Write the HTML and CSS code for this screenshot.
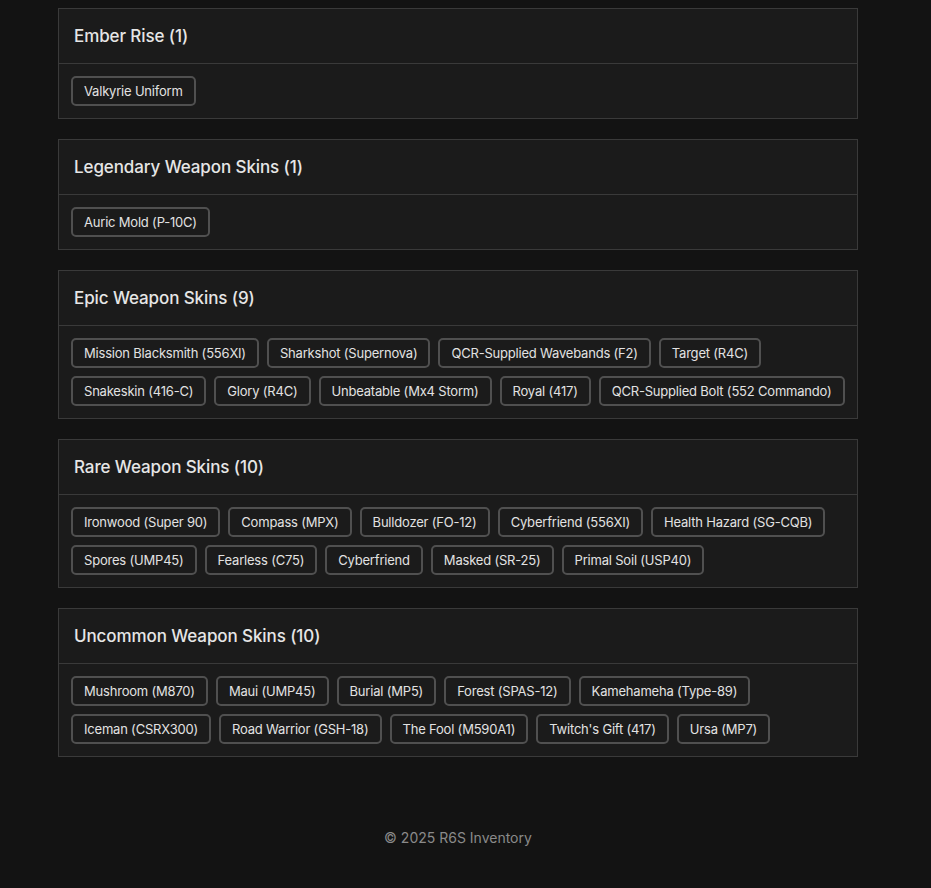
FILE: index.html
```html
<!DOCTYPE html>
<html lang="en">
<head>
<meta charset="utf-8">
<title>R6S Inventory</title>
<link rel="stylesheet" href="styles.css">
</head>
<body>
<main class="page">
  <section class="group">
    <h2 class="group-title">Ember Rise (1)</h2>
    <div class="chips">
      <span class="chip">Valkyrie Uniform</span>
    </div>
  </section>
  <section class="group">
    <h2 class="group-title">Legendary Weapon Skins (1)</h2>
    <div class="chips">
      <span class="chip">Auric Mold (P-10C)</span>
    </div>
  </section>
  <section class="group">
    <h2 class="group-title">Epic Weapon Skins (9)</h2>
    <div class="chips">
      <span class="chip">Mission Blacksmith (556XI)</span>
      <span class="chip">Sharkshot (Supernova)</span>
      <span class="chip">QCR-Supplied Wavebands (F2)</span>
      <span class="chip">Target (R4C)</span>
      <span class="chip">Snakeskin (416-C)</span>
      <span class="chip">Glory (R4C)</span>
      <span class="chip">Unbeatable (Mx4 Storm)</span>
      <span class="chip">Royal (417)</span>
      <span class="chip">QCR-Supplied Bolt (552 Commando)</span>
    </div>
  </section>
  <section class="group">
    <h2 class="group-title">Rare Weapon Skins (10)</h2>
    <div class="chips">
      <span class="chip">Ironwood (Super 90)</span>
      <span class="chip">Compass (MPX)</span>
      <span class="chip">Bulldozer (FO-12)</span>
      <span class="chip">Cyberfriend (556XI)</span>
      <span class="chip">Health Hazard (SG-CQB)</span>
      <span class="chip">Spores (UMP45)</span>
      <span class="chip">Fearless (C75)</span>
      <span class="chip">Cyberfriend</span>
      <span class="chip">Masked (SR-25)</span>
      <span class="chip">Primal Soil (USP40)</span>
    </div>
  </section>
  <section class="group">
    <h2 class="group-title">Uncommon Weapon Skins (10)</h2>
    <div class="chips">
      <span class="chip">Mushroom (M870)</span>
      <span class="chip">Maui (UMP45)</span>
      <span class="chip">Burial (MP5)</span>
      <span class="chip">Forest (SPAS-12)</span>
      <span class="chip">Kamehameha (Type-89)</span>
      <span class="chip">Iceman (CSRX300)</span>
      <span class="chip">Road Warrior (GSH-18)</span>
      <span class="chip">The Fool (M590A1)</span>
      <span class="chip">Twitch's Gift (417)</span>
      <span class="chip">Ursa (MP7)</span>
    </div>
  </section>
  <footer class="footer">© 2025 R6S Inventory</footer>
</main>
</body>
</html>
```

FILE: styles.css
```css
html, body {
  margin: 0;
  padding: 0;
  background: #131313;
}
body {
  font-family: "Inter", "Liberation Sans", sans-serif;
  color: #e2e2e2;
}
.page {
  width: 800px;
  margin: 0 0 0 58px;
  padding-top: 8px;
  display: flex;
  flex-direction: column;
  gap: 20px;
}
.group {
  background: #1b1b1b;
  border: 1px solid #3a3a3a;
}
.group-title {
  margin: 0;
  padding: 15px 15px;
  font-size: 17px;
  line-height: 24px;
  font-weight: 500;
  letter-spacing: -0.1px;
  color: #e6e6e6;
  border-bottom: 1px solid #3a3a3a;
}
.chips {
  display: flex;
  flex-wrap: wrap;
  gap: 8px;
  padding: 12px;
}
.chip {
  display: inline-block;
  box-sizing: border-box;
  height: 30px;
  padding: 5px 11px;
  border: 2px solid #505050;
  border-radius: 5px;
  font-size: 13px;
  line-height: 17px;
  letter-spacing: -0.2px;
  color: #e2e2e2;
  white-space: nowrap;
}
.footer {
  margin-top: 51px;
  text-align: center;
  font-size: 14px;
  line-height: 20px;
  color: #8a8a8a;
}
```
